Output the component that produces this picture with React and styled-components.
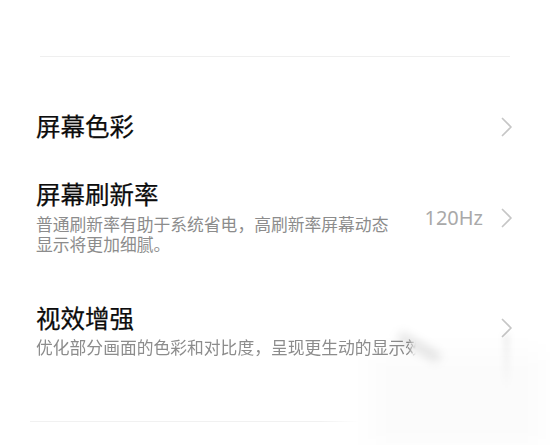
import React from "react";
import styled, { createGlobalStyle } from "styled-components";

const GlobalStyle = createGlobalStyle`
  html, body {
    margin: 0;
    padding: 0;
    background: #ffffff;
  }
  body {
    font-family: "Noto Sans CJK SC", "Noto Sans", sans-serif;
    -webkit-font-smoothing: antialiased;
  }
`;

const Page = styled.div`
  position: relative;
  width: 550px;
  height: 445px;
  overflow: hidden;
  padding-top: 56px;
  box-sizing: border-box;
  background: #ffffff;
`;

const TopDivider = styled.div`
  height: 1px;
  margin: 0 40px;
  background: #efefef;
`;

const BottomDivider = styled.div`
  height: 1px;
  margin: 0 0 0 30px;
  width: 330px;
  background: linear-gradient(to right, #f1f1f1 0, #f1f1f1 290px, rgba(241,241,241,0) 330px);
`;

const List = styled.div`
  display: flex;
  flex-direction: column;
`;

const Row = styled.div`
  display: flex;
  align-items: center;
  padding: 0 37px 0 36px;
  margin-top: ${(p) => p.$gap}px;
  margin-bottom: ${(p) => p.$after || 0}px;
`;

const TextCol = styled.div`
  flex: 1;
  min-width: 0;
  display: flex;
  flex-direction: column;
`;

const Title = styled.div`
  font-size: 24.5px;
  font-weight: 400;
  line-height: 32px;
  color: #0c0c0c;
  white-space: nowrap;
  -webkit-text-stroke: 0.25px #0c0c0c;
`;

const Subtitle = styled.div`
  margin-top: 3.5px;
  font-size: 16.8px;
  line-height: 20px;
  color: #8c8c8c;
  white-space: normal;
`;

const FadedSubtitle = styled(Subtitle)`
  white-space: nowrap;
  -webkit-mask-image: linear-gradient(to right, #000 ${(p) => p.$fade}px, transparent ${(p) => p.$fade + 8}px);
  mask-image: linear-gradient(to right, #000 ${(p) => p.$fade}px, transparent ${(p) => p.$fade + 8}px);
`;

const Right = styled.div`
  display: flex;
  align-items: center;
  margin-left: 24px;
  margin-top: ${(p) => p.$shift || 0}px;
  flex-shrink: 0;
`;

const Value = styled.span`
  font-family: "Noto Sans", "Roboto", sans-serif;
  font-size: 20px;
  line-height: 20px;
  color: #a9a9a9;
  margin-right: 18px;
`;

const ChevronSvg = styled.svg`
  display: block;
  width: 12px;
  height: 20px;
`;

const Chevron = () => (
  <ChevronSvg viewBox="0 0 12 20" fill="none">
    <path
      d="M1.5 1.5 L10 10 L1.5 18.5"
      stroke="#c6c6c6"
      strokeWidth="1.7"
      strokeLinecap="round"
      strokeLinejoin="round"
    />
  </ChevronSvg>
);

const Smear = styled.div`
  position: absolute;
  left: ${(p) => p.$x}px;
  top: ${(p) => p.$y}px;
  width: ${(p) => p.$w}px;
  height: ${(p) => p.$h}px;
  background: ${(p) => p.$bg};
  filter: blur(${(p) => p.$blur}px);
  transform: rotate(${(p) => p.$rot || 0}deg);
  pointer-events: none;
`;

export default function App() {
  return (
    <>
      <GlobalStyle />
      <Page>
        <TopDivider />
        <List>
          <Row $gap={53}>
            <TextCol>
              <Title>屏幕色彩</Title>
            </TextCol>
            <Right $shift={2}>
              <Chevron />
            </Right>
          </Row>
          <Row $gap={36}>
            <TextCol>
              <Title>屏幕刷新率</Title>
              <Subtitle>普通刷新率有助于系统省电，高刷新率屏幕动态显示将更加细腻。</Subtitle>
            </TextCol>
            <Right $shift={5}>
              <Value>120Hz</Value>
              <Chevron />
            </Right>
          </Row>
          <Row $gap={48} $after={64}>
            <TextCol>
              <Title>视效增强</Title>
              <FadedSubtitle $fade={372}>
                优化部分画面的色彩和对比度，呈现更生动的显示效果。
              </FadedSubtitle>
            </TextCol>
            <Right $shift={-2}>
              <Chevron />
            </Right>
          </Row>
        </List>
        <BottomDivider />
        <Smear $x={396} $y={342} $w={46} $h={10} $bg="rgba(0,0,0,0.10)" $blur={5} $rot={30} />
        <Smear $x={372} $y={352} $w={170} $h={95} $bg="rgba(0,0,0,0.015)" $blur={12} />
        <Smear
          $x={504}
          $y={334}
          $w={5}
          $h={55}
          $bg="linear-gradient(rgba(0,0,0,0.08), rgba(0,0,0,0))"
          $blur={3}
        />
      </Page>
    </>
  );
}
